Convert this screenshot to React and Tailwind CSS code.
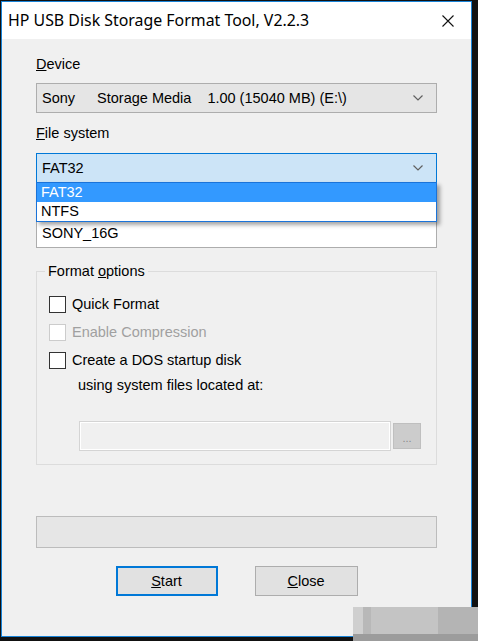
import React from 'react';

const Chevron = () => (
  <svg width="12" height="8" viewBox="0 0 12 8" className="shrink-0">
    <path d="M1.5 1.5 L6 6 L10.5 1.5" fill="none" stroke="#606060" strokeWidth="1.2" />
  </svg>
);

const CheckBox = ({ disabled }) => (
  <div className={`w-[17px] h-[17px] border bg-white ${disabled ? 'border-[#cccccc]' : 'border-[#333333]'}`}></div>
);

const App = () => {
  return (
    <div className="relative w-[478px] h-[641px] bg-[#111111] pt-[1px] pl-[1px] overflow-hidden" style={{ fontFamily: '"Liberation Sans", Arial, sans-serif' }}>
      <div className="w-[471px] h-[636px] border border-[#1883d7] flex flex-col bg-[#f0f0f0]">
        {/* Title bar */}
        <div className="h-[37px] bg-white flex items-center justify-between pl-[6px] pr-[17px] shrink-0">
          <span className="text-[15.9px] text-black" style={{ fontFamily: '"Noto Sans", "Open Sans", sans-serif' }}>
            HP USB Disk Storage Format Tool, V2.2.3
          </span>
          <svg width="12" height="12" viewBox="0 0 12 12">
            <path d="M0.5 0.5 L11.5 11.5 M11.5 0.5 L0.5 11.5" stroke="#111" strokeWidth="1.1" />
          </svg>
        </div>

        {/* Body */}
        <div className="flex flex-col px-[34px] pt-[17px] text-[14.5px] leading-[17px] text-black">
          <div><span className="underline">D</span>evice</div>
          <div className="mt-[10px] h-[30px] bg-[#e5e5e5] border border-[#adadad] flex items-center pl-[5px] pr-[12px]">
            <span>Sony</span>
            <span className="ml-[22px]">Storage Media</span>
            <span className="ml-[16px]">1.00 (15040 MB) (E:\)</span>
            <span className="flex-1"></span>
            <Chevron />
          </div>

          <div className="mt-[12px]"><span className="underline">F</span>ile system</div>
          <div className="relative mt-[11px]">
            <div className="h-[30px] bg-[#cce4f7] border border-[#0078d7] flex items-center pl-[5px] pr-[12px]">
              <span className="flex-1">FAT32</span>
              <Chevron />
            </div>
            <div className="absolute left-0 right-0 top-[29px] z-10 bg-white border border-[#1a73d9] shadow-[3px_3px_4px_rgba(0,0,0,0.35)]">
              <div className="h-[19px] bg-[#3399ff] text-white flex items-center pl-[4px]">FAT32</div>
              <div className="h-[19px] bg-white flex items-center pl-[4px]">NTFS</div>
            </div>
          </div>

          {/* volume label row, covered by the open list */}
          <div className="mt-[9px] h-[17px]"></div>
          <div className="mt-[10px] h-[29px] bg-white border border-[#adadad] flex items-center pl-[5px]">SONY_16G</div>

          <fieldset className="mt-[15px] border border-[#dcdcdc] pl-[12px] pr-[12px] pb-[13px]">
            <legend className="-ml-[4px] px-[3px]">Format <span className="underline">o</span>ptions</legend>
            <div className="mt-[10px] h-[28px] flex items-center gap-[6px]">
              <CheckBox />
              <span>Quick Format</span>
            </div>
            <div className="h-[28px] flex items-center gap-[6px]">
              <CheckBox disabled />
              <span className="text-[#a0a0a0]">Enable Compression</span>
            </div>
            <div className="h-[28px] flex items-center gap-[6px]">
              <CheckBox />
              <span>Create a DOS startup disk</span>
            </div>
            <div className="mt-[3px] ml-[29px]">using system files located at:</div>
            <div className="mt-[27px] ml-[30px] flex items-center gap-[2px]">
              <div className="w-[312px] h-[30px] bg-[#f0f0f0] border border-[#d4d4d4] shadow-[inset_0_0_0_1px_#ffffff]"></div>
              <div className="w-[28px] h-[26px] bg-[#cccccc] border border-[#bfbfbf] flex items-center justify-center text-[#8a8a8a] text-[11px] leading-none pt-[4px]">...</div>
            </div>
          </fieldset>

          <div className="mt-[51px] h-[32px] bg-[#e6e6e6] border border-[#bcbcbc]"></div>

          <div className="mt-[18px] flex justify-center gap-[37px]">
            <div className="w-[102px] h-[30px] bg-[#e1e1e1] border-2 border-[#0078d7] flex items-center justify-center">
              <span><span className="underline">S</span>tart</span>
            </div>
            <div className="w-[103px] h-[30px] bg-[#e1e1e1] border border-[#adadad] flex items-center justify-center">
              <span><span className="underline">C</span>lose</span>
            </div>
          </div>
        </div>
      </div>

      {/* blurred watermark */}
      <div className="absolute left-[353px] top-[607px] w-[125px] h-[34px] bg-[#c6c6c6] flex flex-col">
        <div className="flex-1 flex">
          <div className="w-[10px] bg-[#cfcfcf]"></div>
          <div className="w-[8px] bg-[#b8b8b8]"></div>
          <div className="flex-1 bg-[#c4c4c4]"></div>
          <div className="w-[40px] bg-[#b4b4b4]"></div>
        </div>
        <div className="h-[7px] bg-[#9c9c9c]"></div>
      </div>
    </div>
  );
};

export default App;
